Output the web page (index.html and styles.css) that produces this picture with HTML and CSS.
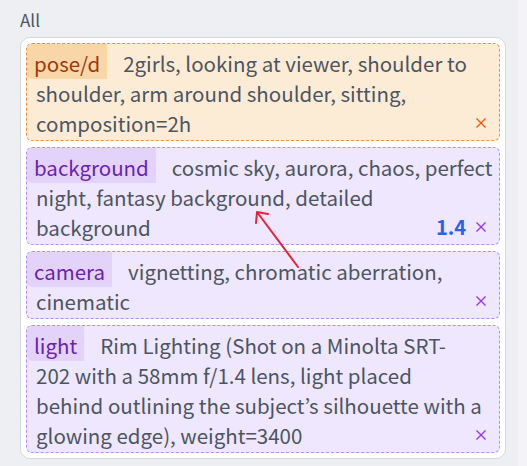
FILE: index.html
```html
<!DOCTYPE html>
<html>
<head>
<meta charset="utf-8">
<link rel="stylesheet" href="styles.css">
</head>
<body>
<div class="page">
  <div class="main">
    <div class="label">All</div>
    <div class="card">
      <div class="item orange">
        <span class="tag">pose/d</span>2girls, looking at viewer, shoulder to shoulder, arm around shoulder, sitting, composition=2h<span class="actions"><svg class="x" viewBox="0 0 10 10"><path d="M0.5 0.5 L9.5 9.5 M9.5 0.5 L0.5 9.5"/></svg></span>
      </div>
      <div class="item purple">
        <span class="tag">background</span>cosmic sky, aurora, chaos, perfect<br>night, fantasy background, detailed<br>background<span class="actions"><span class="weight">1.4</span><svg class="x" viewBox="0 0 10 10"><path d="M0.5 0.5 L9.5 9.5 M9.5 0.5 L0.5 9.5"/></svg></span>
      </div>
      <div class="item purple">
        <span class="tag">camera</span>vignetting, chromatic aberration, cinematic<span class="actions"><svg class="x" viewBox="0 0 10 10"><path d="M0.5 0.5 L9.5 9.5 M9.5 0.5 L0.5 9.5"/></svg></span>
      </div>
      <div class="item purple">
        <span class="tag">light</span>Rim Lighting (Shot on a Minolta SRT-<br>202 with a 58mm f/1.4 lens, light placed<br>behind outlining the subject’s silhouette with a<br>glowing edge), weight=3400<span class="actions"><svg class="x" viewBox="0 0 10 10"><path d="M0.5 0.5 L9.5 9.5 M9.5 0.5 L0.5 9.5"/></svg></span>
      </div>
    </div>
  </div>
  <div class="track"></div>
  <svg class="arrow" width="60" height="70" viewBox="0 0 60 70">
    <path d="M44 58 L3 3 M3 3 L14 5 M3 3 L2 14"/>
  </svg>
</div>
</body>
</html>
```
FILE: styles.css
```css
html, body {
  margin: 0;
  padding: 0;
}
body {
  background: #eeeff2;
  font-family: "Noto Sans CJK KR", "Noto Sans", sans-serif;
  color: #4b5563;
}
.page {
  position: relative;
  display: flex;
  width: 527px;
  height: 466px;
}
.main {
  width: 506px;
  padding: 7px 0 0 20px;
  box-sizing: border-box;
}
.track {
  width: 9px;
  margin-left: 12px;
  background: #f4f4f6;
}
.label {
  font-size: 17px;
  line-height: 26px;
  color: #4b5563;
  margin-bottom: 4px;
}
.card {
  background: #fff;
  border: 1px solid #d6d8de;
  border-radius: 10px;
  padding: 5px;
  display: flex;
  flex-direction: column;
  gap: 6px;
}
.item {
  border: 1px dashed;
  border-radius: 6px;
  padding: 4px 6px 2px 9px;
  font-size: 20.5px;
  line-height: 30px;
  color: #4b5563;
}
.item.orange {
  background: #fdecd5;
  border-color: #f0922e;
}
.item.purple {
  background: #efe7fd;
  border-color: #b98af6;
}
.tag {
  display: inline-block;
  padding: 4px 7px 1px 7px;
  margin: -4px 16px -1px -9px;
  border-radius: 5px 0 0 5px;
}
.orange .tag {
  background: #f8d6a8;
  color: #9a3a0c;
}
.purple .tag {
  background: #e3d3fb;
  color: #6b21b0;
}
.actions {
  float: right;
  display: flex;
  align-items: center;
  height: 30px;
  gap: 10px;
  margin-right: 7px;
}
.weight {
  font-weight: bold;
  color: #2563eb;
  font-size: 20px;
}
.x {
  width: 10px;
  height: 10px;
  fill: none;
  stroke-width: 1.3;
}
.orange .x {
  stroke: #ea580c;
}
.purple .x {
  stroke: #9333ea;
}
.arrow {
  position: absolute;
  left: 254px;
  top: 209px;
  fill: none;
  stroke: #e8213a;
  stroke-width: 2;
  stroke-linecap: round;
}
```
